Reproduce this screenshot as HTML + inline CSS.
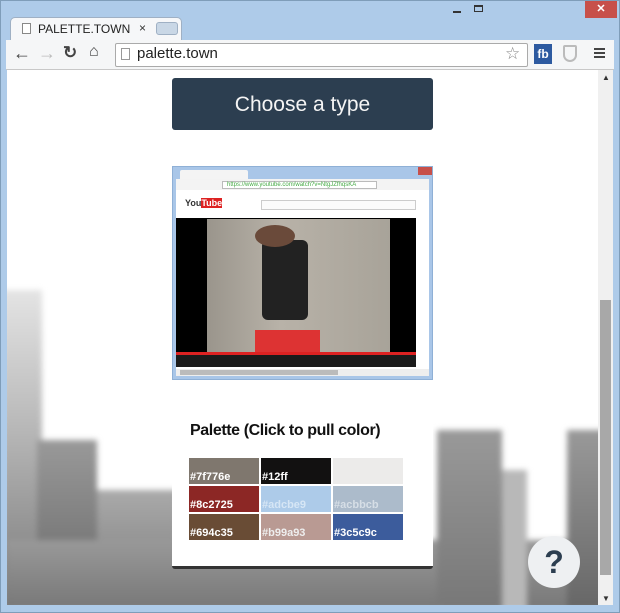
<!DOCTYPE html>
<html><head><style>
*{margin:0;padding:0;box-sizing:border-box}
body{width:620px;height:613px;overflow:hidden;background:#aecbe9;font-family:"Liberation Sans",sans-serif;position:relative}
.abs{position:absolute}
.sw{position:absolute;width:70px;height:26px;color:#fff;font-size:11px;font-weight:bold;padding:12px 0 0 1px;line-height:14px}
</style></head><body>
<div class="abs" style="left:0;top:0;width:620px;height:613px;border:1px solid #7f9db9"></div>
<div class="abs" style="left:453px;top:11px;width:8px;height:2px;background:#333"></div>
<div class="abs" style="left:474px;top:5px;width:9px;height:7px;border:1px solid #333;border-top-width:2px"></div>
<div class="abs" style="left:585px;top:1px;width:32px;height:17px;background:#c7504a;color:#fff;font-size:11px;text-align:center;line-height:17px;font-weight:bold">✕</div>
<div class="abs" style="left:10px;top:17px;width:172px;height:24px;background:#f6f7f9;border:1px solid #9fb0c4;border-bottom:none;border-radius:5px 5px 0 0"></div>
<div class="abs" style="left:22px;top:23px;width:9px;height:11px;border:1px solid #888;background:#fff"></div>
<div class="abs" style="left:38px;top:22px;font-size:12px;color:#222">PALETTE.TOWN</div>
<div class="abs" style="left:139px;top:21px;font-size:12px;color:#333">×</div>
<div class="abs" style="left:156px;top:22px;width:22px;height:13px;background:#c9d7e6;border:1px solid #9fb0c4;border-radius:3px"></div>
<div class="abs" style="left:6px;top:40px;width:608px;height:30px;background:#f5f6f7;border-bottom:1px solid #c8c8c8"></div>
<div class="abs" style="left:13px;top:43px;font-size:18px;color:#444;font-weight:bold">←</div>
<div class="abs" style="left:38px;top:43px;font-size:18px;color:#bbb;font-weight:bold">→</div>
<div class="abs" style="left:63px;top:43px;font-size:17px;color:#444;font-weight:bold">↻</div>
<div class="abs" style="left:89px;top:43px;font-size:16px;color:#444">⌂</div>
<div class="abs" style="left:115px;top:43px;width:413px;height:24px;background:#fff;border:1px solid #aaa;border-radius:2px"></div>
<div class="abs" style="left:121px;top:48px;width:9px;height:12px;border:1px solid #999"></div>
<div class="abs" style="left:137px;top:45px;font-size:15px;color:#222">palette.town</div>
<div class="abs" style="left:505px;top:44px;font-size:17px;color:#888">☆</div>
<div class="abs" style="left:534px;top:44px;width:18px;height:20px;background:#2d5aa0;color:#fff;font-size:12px;font-weight:bold;text-align:center;line-height:20px">fb</div>
<div class="abs" style="left:563px;top:45px;width:14px;height:17px;border:2px solid #bbb;border-radius:2px 2px 7px 7px"></div>
<div class="abs" style="left:594px;top:48px;width:11px;height:2px;background:#444;box-shadow:0 4px 0 #444,0 8px 0 #444"></div>
<div class="abs" style="left:7px;top:70px;width:591px;height:535px;background:#fff;overflow:hidden">
 <div class="abs" style="left:0;top:0;width:591px;height:535px;filter:blur(3px)">
 <div class="abs" style="left:-5px;top:220px;width:40px;height:320px;background:linear-gradient(#e4e4e4,#bbb 40%,#777)"></div>
 <div class="abs" style="left:30px;top:370px;width:60px;height:170px;background:linear-gradient(#999,#666)"></div>
 <div class="abs" style="left:90px;top:420px;width:80px;height:120px;background:linear-gradient(#aaa,#777)"></div>
 <div class="abs" style="left:0;top:470px;width:591px;height:70px;background:linear-gradient(#999,#777)"></div>
 <div class="abs" style="left:430px;top:360px;width:65px;height:180px;background:linear-gradient(#999,#777)"></div>
 <div class="abs" style="left:495px;top:400px;width:25px;height:140px;background:#b8b8b8"></div>
 <div class="abs" style="left:560px;top:360px;width:40px;height:180px;background:linear-gradient(#999,#666)"></div>
 </div>
</div>
<div class="abs" style="left:598px;top:70px;width:15px;height:535px;background:#f0f0f0"></div>
<div class="abs" style="left:600px;top:300px;width:11px;height:275px;background:#a8a8a8"></div>
<div class="abs" style="left:602px;top:73px;font-size:8px;color:#333">▲</div>
<div class="abs" style="left:602px;top:594px;font-size:8px;color:#333">▼</div>
<div class="abs" style="left:172px;top:78px;width:261px;height:52px;background:#2c3e50;border-radius:3px;color:#f4f4f4;font-size:21px;text-align:center;line-height:54px">Choose a type</div>
<div class="abs" style="left:172px;top:166px;width:261px;height:403px;background:#fff;border-radius:3px;border-bottom:3px solid #333"></div>
<div class="abs" style="left:172px;top:166px;width:261px;height:214px;background:#a9c6e8;border:1px solid #8fb0d6"></div>
<div class="abs" style="left:180px;top:170px;width:68px;height:9px;background:#f4f4f4;border-radius:2px 2px 0 0"></div>
<div class="abs" style="left:418px;top:167px;width:14px;height:8px;background:#c7504a"></div>
<div class="abs" style="left:176px;top:179px;width:253px;height:11px;background:#f3f3f3"></div>
<div class="abs" style="left:222px;top:181px;width:155px;height:8px;background:#fff;border:1px solid #bbb;font-size:6px;color:#4a4;line-height:6px;padding-left:4px">https://www.youtube.com/watch?v=NtgJZfhqsKA</div>
<div class="abs" style="left:176px;top:190px;width:253px;height:186px;background:#fff"></div>
<div class="abs" style="left:185px;top:198px;width:28px;height:12px;font-size:9px;font-weight:bold;color:#333">You<span style="background:#d22;color:#fff">Tube</span></div>
<div class="abs" style="left:261px;top:200px;width:155px;height:10px;border:1px solid #ccc;background:#fbfbfb"></div>
<div class="abs" style="left:176px;top:218px;width:240px;height:149px;background:#000"></div>
<div class="abs" style="left:207px;top:219px;width:183px;height:133px;background:linear-gradient(90deg,#9a958c,#b8b2a8 40%,#a8a399)"></div>
<div class="abs" style="left:262px;top:240px;width:46px;height:80px;background:#222;border-radius:6px"></div>
<div class="abs" style="left:255px;top:225px;width:40px;height:22px;background:#6a4a3a;border-radius:50%"></div>
<div class="abs" style="left:255px;top:330px;width:65px;height:22px;background:#d33"></div>
<div class="abs" style="left:176px;top:352px;width:240px;height:3px;background:#d22"></div>
<div class="abs" style="left:176px;top:355px;width:240px;height:12px;background:#1b1b1b"></div>
<div class="abs" style="left:176px;top:369px;width:253px;height:7px;background:#eee"></div>
<div class="abs" style="left:180px;top:370px;width:158px;height:5px;background:#bbb"></div>
<div class="abs" style="left:190px;top:422px;font-size:16px;color:#111;font-weight:bold;letter-spacing:-0.4px">Palette (Click to pull color)</div>
<div class="sw" style="left:189px;top:458px;background:#7f776e">#7f776e</div>
<div class="sw" style="left:261px;top:458px;background:#121111">#12ff</div>
<div class="sw" style="left:333px;top:458px;background:#ecebea"></div>
<div class="sw" style="left:189px;top:486px;background:#8c2725">#8c2725</div>
<div class="sw" style="left:261px;top:486px;background:#adcbe9;color:#d6e6f5">#adcbe9</div>
<div class="sw" style="left:333px;top:486px;background:#acbbcb;color:#d6dee6">#acbbcb</div>
<div class="sw" style="left:189px;top:514px;background:#694c35">#694c35</div>
<div class="sw" style="left:261px;top:514px;background:#b99a93;color:#eee">#b99a93</div>
<div class="sw" style="left:333px;top:514px;background:#3c5c9c">#3c5c9c</div>
<div class="abs" style="left:528px;top:536px;width:52px;height:52px;border-radius:50%;background:#eef0f2;color:#2c3e50;font-size:32px;font-weight:bold;text-align:center;line-height:52px">?</div>
</body></html>
